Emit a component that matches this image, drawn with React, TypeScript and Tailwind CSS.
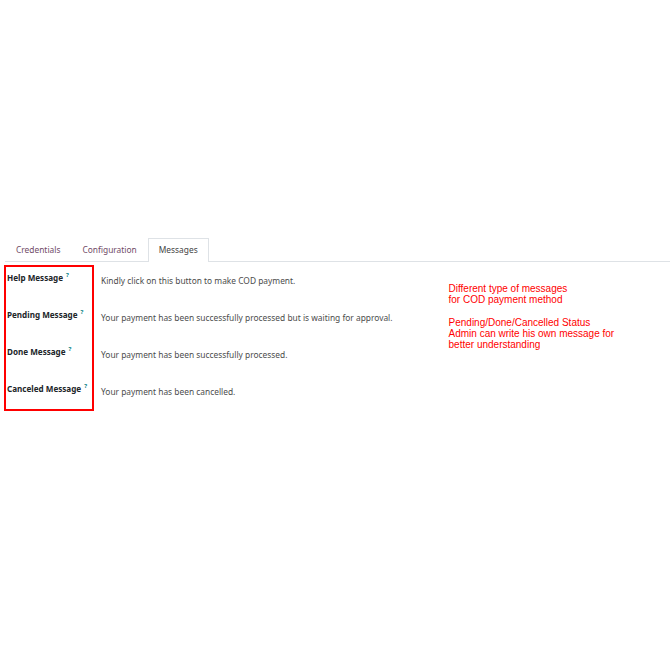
import React from "react";

const rows = [
  { label: "Help Message", value: "Kindly click on this button to make COD payment." },
  { label: "Pending Message", value: "Your payment has been successfully processed but is waiting for approval." },
  { label: "Done Message", value: "Your payment has been successfully processed." },
  { label: "Canceled Message", value: "Your payment has been cancelled." },
];

const tabs = ["Credentials", "Configuration", "Messages"];

export default function App() {
  return (
    <div className="w-[670px] h-[670px] bg-white font-['Noto_Sans',sans-serif] text-[#4c4c4c]">
      <div className="h-[238px]" />
      {/* tabs */}
      <div className="flex items-end ml-[5px] border-b border-[#dee2e6] h-[24px]">
        {tabs.map((t) => (
          <div
            key={t}
            className={
              t === "Messages"
                ? "h-[24px] px-[10px] flex items-center border border-b-0 border-[#dee2e6] bg-white -mb-px text-[8.4px] text-[#444]"
                : "h-[23px] px-[11px] pt-[2px] flex items-center text-[8.4px] text-[#714b67]"
            }
          >
            {t}
          </div>
        ))}
      </div>
      <div className="flex mt-[3px]">
        <div className="ml-[4px] w-[90px] h-[146px] border-2 border-[#ff0000] pt-[4px] pl-[1px] flex flex-col gap-[23px]">
          {rows.map((r) => (
            <div key={r.label} className="h-[14px] leading-[14px] text-[8.1px] font-bold text-[#212529] whitespace-nowrap">
              {r.label}
              <span className="relative top-[-4px] text-[#017e84] text-[6px] ml-[3px]">?</span>
            </div>
          ))}
        </div>
        <div className="ml-[7px] pt-[9px] flex flex-col gap-[23px]">
          {rows.map((r) => (
            <div key={r.label} className="h-[14px] leading-[14px] text-[8.4px] text-[#4c4c4c] whitespace-nowrap">
              {r.value}
            </div>
          ))}
        </div>
        <div className="ml-[56px] pt-[18px] font-['Liberation_Sans',sans-serif] text-[10px] leading-[11px] text-[#ff0000] whitespace-nowrap">
          <div>Different type of messages</div>
          <div>for COD payment method</div>
          <div className="mt-[12px]">Pending/Done/Cancelled Status</div>
          <div>Admin can write his own message for</div>
          <div>better understanding</div>
        </div>
      </div>
    </div>
  );
}
